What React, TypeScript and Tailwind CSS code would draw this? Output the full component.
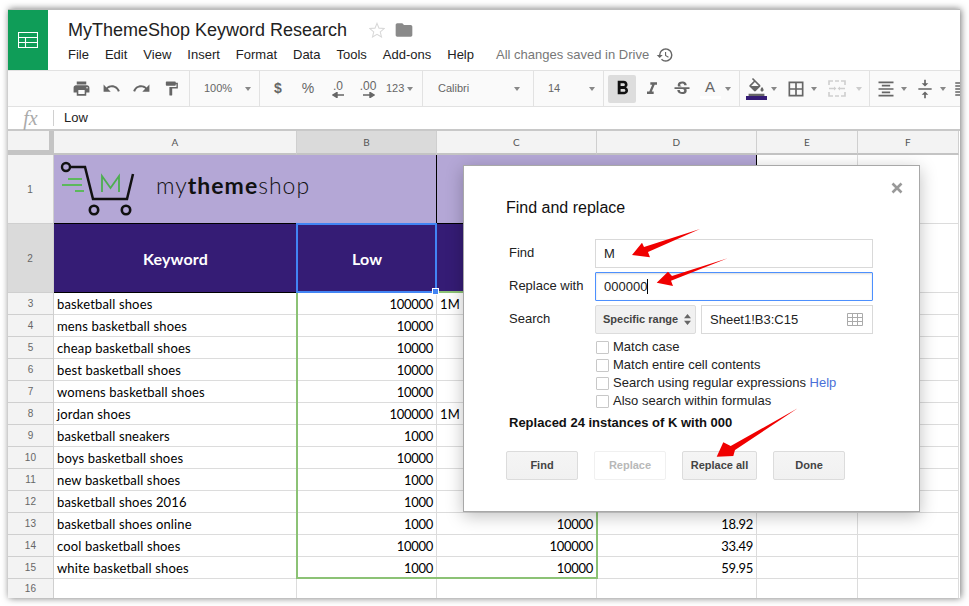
import React from "react";
import {
  MdPrint, MdUndo, MdRedo, MdFormatPaint, MdFormatBold, MdFormatItalic, MdStrikethroughS,
  MdFormatColorFill, MdBorderAll, MdFormatAlignCenter, MdVerticalAlignCenter, MdHistory, MdFolder,
  MdFormatAlignLeft,
} from "react-icons/md";

const Caret = ({ light }: { light?: boolean }) =>
  light ? (
    <span className="block w-0 h-0 border-x-[3.5px] border-x-transparent border-t-[4px] border-t-[#ccc]" />
  ) : (
    <span className="block w-0 h-0 border-x-[3.5px] border-x-transparent border-t-[4px] border-t-[#888]" />
  );

const Slot = ({ children }: { children: React.ReactNode }) => (
  <div className="w-[30px] h-full flex items-center justify-center shrink-0 relative">{children}</div>
);

const ArrowGlyph = ({ flip }: { flip?: boolean }) => (
  <svg width="13" height="6" viewBox="0 0 13 6" className="block">
    {flip ? (
      <path d="M1 3h8M8 0.5v5l4-2.5z" stroke="#666" strokeWidth="1.4" fill="#666" />
    ) : (
      <path d="M12 3H4M5 0.5v5L1 3z" stroke="#666" strokeWidth="1.4" fill="#666" />
    )}
  </svg>
);

const Toolbar = () => (
  <div className="h-[37px] flex bg-[#fafafa] border-y border-[#e2e2e2] text-[#666] text-[11px] overflow-hidden shrink-0">
    <div className="w-[182px] shrink-0 flex items-center pl-[58px] border-r border-[#e2e2e2]">
      <Slot><MdPrint size={19} /></Slot>
      <Slot><MdUndo size={19} /></Slot>
      <Slot><MdRedo size={19} /></Slot>
      <Slot><MdFormatPaint size={17} /></Slot>
    </div>
    <div className="w-[70px] shrink-0 flex items-center justify-between pl-[14px] pr-[8px] border-r border-[#e2e2e2]">
      <span>100%</span><Caret />
    </div>
    <div className="w-[163px] shrink-0 flex items-center pl-[3px] border-r border-[#e2e2e2]">
      <Slot><span className="text-[14px] font-bold">$</span></Slot>
      <Slot><span className="text-[14px]">%</span></Slot>
      <Slot>
        <div className="flex flex-col items-center leading-none pt-[2px]">
          <span className="text-[12px] leading-[11px]">.0</span><ArrowGlyph />
        </div>
      </Slot>
      <Slot>
        <div className="flex flex-col items-center leading-none pt-[2px]">
          <span className="text-[12px] leading-[11px]">.00</span><ArrowGlyph flip />
        </div>
      </Slot>
      <span className="ml-[3px] mr-[3px] text-[11px]">123</span><Caret />
    </div>
    <div className="w-[111px] shrink-0 flex items-center justify-between pl-[15px] pr-[13px] border-r border-[#e2e2e2]">
      <span>Calibri</span><Caret />
    </div>
    <div className="w-[70px] shrink-0 flex items-center justify-between pl-[14px] pr-[8px] border-r border-[#e2e2e2]">
      <span>14</span><Caret />
    </div>
    <div className="w-[136px] shrink-0 flex items-center pl-[4px] border-r border-[#e2e2e2]">
      <div className="w-[28px] h-[28px] bg-[#dddddd] rounded-[2px] flex items-center justify-center text-[#111]"><MdFormatBold size={23} /></div>
      <div className="w-[30px] ml-[1px] flex justify-center"><MdFormatItalic size={20} /></div>
      <div className="w-[30px] flex justify-center"><MdStrikethroughS size={20} /></div>
      <div className="w-[26px] flex flex-col items-center">
        <span className="text-[15px] leading-[18px]">A</span>
        <span className="block w-[21px] h-[3px] bg-white" />
      </div>
      <div className="ml-[2px]"><Caret /></div>
    </div>
    <div className="w-[130px] shrink-0 flex items-center pl-[5px] border-r border-[#e2e2e2]">
      <div className="w-[22px] flex flex-col items-center">
        <MdFormatColorFill size={19} className="-mb-[1px]" />
        <span className="block w-[21px] h-[4px] bg-[#351c75]" />
      </div>
      <div className="ml-[4px]"><Caret /></div>
      <div className="ml-[8px] w-[22px] flex justify-center"><MdBorderAll size={20} /></div>
      <div className="ml-[4px]"><Caret /></div>
      <div className="ml-[9px] w-[22px] flex justify-center">
        <svg width="18" height="17" viewBox="0 0 18 17" fill="none" stroke="#cfcfcf" strokeWidth="1.6">
          <path d="M1 5V1h4M7 1h4M13 1h4v4M1 12v4h4M7 16h4M13 16h4v-4" />
          <path d="M1 8.5h5M12 8.5h5" />
          <path d="M6 6.5l2.4 2-2.4 2zM12 6.5l-2.4 2 2.4 2z" fill="#cfcfcf" stroke="none" />
        </svg>
      </div>
      <div className="ml-[8px]"><Caret light /></div>
    </div>
    <div className="flex-1 flex items-center pl-[4px]">
      <div className="w-[24px] flex justify-center"><MdFormatAlignCenter size={20} /></div>
      <div className="ml-[3px]"><Caret /></div>
      <div className="ml-[6px] w-[24px] flex justify-center"><MdVerticalAlignCenter size={20} /></div>
      <div className="ml-[3px]"><Caret /></div>
      <div className="ml-[7px] w-[20px] flex justify-start shrink-0"><MdFormatAlignLeft size={18} /></div>
    </div>
  </div>
);

const rows: { k: string; low: string; high?: string; c?: string; d?: string }[] = [
  { k: "basketball shoes", low: "100000", high: "1M" },
  { k: "mens basketball shoes", low: "10000" },
  { k: "cheap basketball shoes", low: "10000" },
  { k: "best basketball shoes", low: "10000" },
  { k: "womens basketball shoes", low: "10000" },
  { k: "jordan shoes", low: "100000", high: "1M" },
  { k: "basketball sneakers", low: "1000" },
  { k: "boys basketball shoes", low: "10000" },
  { k: "new basketball shoes", low: "1000" },
  { k: "basketball shoes 2016", low: "1000" },
  { k: "basketball shoes online", low: "1000", c: "10000", d: "18.92" },
  { k: "cool basketball shoes", low: "10000", c: "100000", d: "33.49" },
  { k: "white basketball shoes", low: "1000", c: "10000", d: "59.95" },
];

const RowHead = ({ n, active, tall }: { n: number; active?: boolean; tall?: boolean }) => (
  <div
    className={`flex items-center justify-center text-[10px] text-[#666] border-r border-b border-[#cfcfcf] font-['Liberation_Sans',sans-serif] ${
      active ? "bg-[#dadada]" : "bg-[#f3f3f3]"
    } ${tall ? "pr-[1px]" : ""}`}
  >
    {n}
  </div>
);

const ColHead = ({ l, active }: { l: string; active?: boolean }) => (
  <div
    className={`flex items-center justify-center text-[10px] text-[#555] border-r border-b-2 border-r-[#cfcfcf] border-b-[#c4c4c4] ${
      active ? "bg-[#dadada]" : "bg-[#f3f3f3]"
    }`}
  >
    {l}
  </div>
);

const Cell = ({ children, right }: { children?: React.ReactNode; right?: boolean }) => (
  <div
    className={`flex items-center px-[3px] pt-[2px] border-r border-b border-[#dcdcdc] bg-white text-black whitespace-nowrap overflow-hidden ${
      right ? "justify-end tracking-[-0.3px]" : ""
    }`}
  >
    {children}
  </div>
);

const Sheet = () => (
  <div
    className="grid grid-cols-[46px_243px_140px_160px_160px_101px_101px] grid-rows-[24px_69px_69px_repeat(13,22px)_19px] font-['Lato',sans-serif] text-[13px] tracking-[0.15px]"
  >
    <div className="bg-[#f3f3f3] border-r-[5px] border-b-[5px] border-[#c4c4c4] border-t-0" />
    <ColHead l="A" />
    <ColHead l="B" active />
    <ColHead l="C" />
    <ColHead l="D" />
    <ColHead l="E" />
    <ColHead l="F" />

    <RowHead n={1} tall />
    <div className="col-span-2 bg-[#b4a7d6] border-r border-b border-black flex items-center overflow-hidden">
      <svg width="100" height="69" viewBox="54 155 100 69" className="shrink-0" fill="none">
        <circle cx="66" cy="167" r="4" stroke="#111" strokeWidth="2.4" />
        <path d="M70 167H85L93 199H127L133 174" stroke="#111" strokeWidth="2.5" />
        <circle cx="94" cy="210" r="4.2" stroke="#111" strokeWidth="2.6" />
        <circle cx="126" cy="210" r="4.2" stroke="#111" strokeWidth="2.6" />
        <path d="M68 179H82M62 185H82M75 191H84" stroke="#5cb85c" strokeWidth="2" />
        <path d="M102 192V176L110.500 188L119 176V192" stroke="#4dae50" strokeWidth="1.8" />
      </svg>
      <span className="ml-[2px] -mt-[7px] font-['Lato',sans-serif] text-[23px] text-[#111] tracking-[1px] font-light leading-none">
        my<span className="font-bold">theme</span>shop
      </span>
    </div>
    <div className="col-span-2 bg-[#b4a7d6] border-r border-b border-black" />
    <Cell /><Cell />

    <RowHead n={2} active tall />
    <div className="bg-[#351c75] border-b border-black pt-[2px] text-white font-bold text-[16px] flex items-center justify-center">Keyword</div>
    <div className="bg-[#351c75] border-b border-black pt-[2px] text-white font-bold text-[16px] flex items-center justify-center">Low</div>
    <div className="bg-[#351c75] border-b border-black" />
    <div className="bg-[#351c75] border-r border-b border-black" />
    <Cell /><Cell />

    {rows.map((r, i) => (
      <React.Fragment key={r.k}>
        <RowHead n={i + 3} />
        <Cell>{r.k}</Cell>
        <Cell right>{r.low}</Cell>
        <Cell right={!r.high}>{r.high ?? r.c}</Cell>
        <Cell right>{r.d}</Cell>
        <Cell /><Cell />
      </React.Fragment>
    ))}

    <div className="flex items-center justify-center text-[10px] text-[#666] border-r border-[#cfcfcf] bg-[#f3f3f3] font-['Liberation_Sans',sans-serif]">16</div>
    <div className="border-r border-[#dcdcdc]" />
    <div className="border-r border-[#dcdcdc]" />
    <div className="border-r border-[#dcdcdc]" />
    <div className="border-r border-[#dcdcdc]" />
    <div className="border-r border-[#dcdcdc]" />
    <div className="border-r border-[#dcdcdc]" />
  </div>
);

const Check = ({ children }: { children: React.ReactNode }) => (
  <div className="h-[18px] flex items-center">
    <span className="block w-[13px] h-[13px] ml-[1px] mr-[4px] bg-white border border-[#c8c8c8] rounded-[1px]" />
    {children}
  </div>
);

const Btn = ({ children, w, off }: { children: React.ReactNode; w: string; off?: boolean }) => (
  <div
    className={`h-[29px] flex items-center justify-center text-[11px] font-bold rounded-[2px] border ${w} ${
      off ? "bg-white border-[#f0f0f0] text-[#b8b8b8]" : "bg-gradient-to-b from-[#f5f5f5] to-[#f1f1f1] border-[#dcdcdc] text-[#444]"
    }`}
  >
    {children}
  </div>
);

const Dialog = () => (
  <div className="absolute left-[463px] top-[165px] w-[457px] h-[347px] bg-white border border-[#a8a8a8] shadow-[0_4px_16px_rgba(0,0,0,0.25)] pl-[42px] pt-[32px] text-[13px] text-[#222] font-['Liberation_Sans',sans-serif]">
    <svg width="12" height="12" viewBox="0 0 12 12" className="absolute left-[427px] top-[16px]">
      <path d="M1.500 1.500l9 9M10.500 1.500l-9 9" stroke="#999" strokeWidth="2.6" />
    </svg>
    <div className="text-[16px] leading-[20px] text-[#111]">Find and replace</div>
    <div className="mt-[21px] flex flex-col gap-[4px]">
      <div className="flex h-[29px]">
        <div className="w-[89px] pl-[3px] pt-[4px]">Find</div>
        <div className="w-[278px] border border-[#d9d9d9] flex items-center pl-[8px]">M</div>
      </div>
      <div className="flex h-[29px]">
        <div className="w-[89px] pl-[3px] pt-[4px]">Replace with</div>
        <div className="w-[278px] border border-[#4d90fe] rounded-[1px] flex items-center pl-[8px] shadow-[inset_0_1px_2px_rgba(0,0,0,0.15)]">
          000000<span className="block w-[1px] h-[15px] bg-black" />
        </div>
      </div>
      <div className="flex h-[29px]">
        <div className="w-[89px] pl-[3px] pt-[4px]">Search</div>
        <div className="w-[101px] border border-[#dcdcdc] rounded-[2px] bg-[#f1f1f1] flex items-center pl-[7px] text-[11px] font-bold text-[#444]">
          Specific range
          <svg width="7" height="11" viewBox="0 0 7 11" className="ml-[6px]"><path d="M3.500 0L7 4.200H0zM3.500 11L0 6.800H7z" fill="#666" /></svg>
        </div>
        <div className="ml-[5px] w-[172px] border border-[#d9d9d9] flex items-center justify-between pl-[8px] pr-[9px]">
          Sheet1!B3:C15
          <svg width="16" height="13" viewBox="0 0 16 13" fill="none" stroke="#aaa"><path d="M.5.500h15v12H.5zM.5 4.500h15M.5 8.500h15M5.500.500v12M10.500.500v12" /></svg>
        </div>
      </div>
    </div>
    <div className="mt-[4px] ml-[89px] flex flex-col">
      <Check>Match case</Check>
      <Check>Match entire cell contents</Check>
      <Check>Search using regular expressions&nbsp;<span className="text-[#4a6fd8]">Help</span></Check>
      <Check>Also search within formulas</Check>
    </div>
    <div className="mt-[5px] ml-[3px] text-[13px] leading-[16px] font-bold text-[#111]">Replaced 24 instances of K with 000</div>
    <div className="mt-[20px] flex gap-[16px]">
      <Btn w="w-[72px]">Find</Btn>
      <Btn w="w-[72px]" off>Replace</Btn>
      <Btn w="w-[75px]">Replace all</Btn>
      <Btn w="w-[72px]">Done</Btn>
    </div>
  </div>
);

export default function App() {
  return (
    <div className="relative w-[969px] h-[606px] bg-white overflow-hidden font-['Liberation_Sans',sans-serif]">
      <div className="ml-[8px] mt-[9px] w-[952px] h-[589px] flex flex-col bg-white border-t border-[#bdbdbd] shadow-[1px_0_7px_rgba(0,0,0,0.55)] overflow-hidden">
        <header className="h-[60px] flex shrink-0">
          <div className="w-[40px] bg-[#0f9d58] flex items-center justify-center">
            <svg width="20" height="17" viewBox="0 0 20 17" fill="none" stroke="white" strokeWidth="1.100">
              <path d="M.5.500h19v15H.5zM.5 5.500h19M.5 10.500h19M7.500 5.500v10" />
            </svg>
          </div>
          <div className="pl-[20px] pt-[9px] flex flex-col flex-1">
            <div className="flex items-center h-[22px]">
              <span className="text-[18px] text-[#222] leading-[22px]">MyThemeShop Keyword Research</span>
              <svg width="16" height="16" viewBox="0 0 24 24" className="ml-[22px]" fill="none" stroke="#d8d8d8" strokeWidth="1.600">
                <path d="M12 2l3 7.200 7.800.600-5.900 5.100 1.800 7.600L12 18.400l-6.700 4.100 1.800-7.600L1.200 9.800 9 9.200z" />
              </svg>
              <MdFolder size={20} className="ml-[9px] text-[#8a8a8a]" />
            </div>
            <div className="flex items-center gap-[16px] text-[13px] text-[#222] mt-[4px] h-[20px]">
              <span>File</span><span>Edit</span><span>View</span><span>Insert</span><span>Format</span>
              <span>Data</span><span>Tools</span><span>Add-ons</span><span>Help</span>
              <span className="ml-[6px] text-[#777]">All changes saved in Drive</span>
              <MdHistory size={18} className="-ml-[9px] text-[#666]" />
            </div>
          </div>
        </header>
        <Toolbar />
        <div className="h-[24px] flex items-center border-b-2 border-[#c8c8c8] shrink-0">
          <span className="w-[45px] text-center font-['Liberation_Serif',serif] italic text-[20px] leading-none text-[#aaa] -mt-[1px]">fx</span>
          <span className="block w-px h-[16px] bg-[#d0d0d0]" />
          <span className="ml-[10px] text-[13px] text-[#222]">Low</span>
        </div>
        <Sheet />
      </div>

      {/* selection overlays */}
      <div className="absolute left-[296px] top-[291px] w-[302px] h-[288px] border-2 border-[#8cc275]" />
      <div className="absolute left-[296px] top-[223px] w-[141px] h-[70px] border-2 border-[#4285f4]" />
      <div className="absolute left-[432px] top-[288px] w-[7px] h-[7px] bg-[#4285f4] border border-white" />

      <Dialog />

      {/* red annotation arrows */}
      <svg width="969" height="606" viewBox="0 0 969 606" className="absolute left-0 top-0 pointer-events-none" fill="#f00000">
        <path d="M700 229L648 252L650 257.300L632 255L642 242.700L644 247Z" />
        <path d="M727.700 258.300L671 280.700L673 286L656.700 282.700L668 271.700L672 276Z" />
        <path d="M797.700 408.300L735 450L733.300 456L716.700 456.700L723.300 442.300L730.700 446Z" />
      </svg>
    </div>
  );
}
